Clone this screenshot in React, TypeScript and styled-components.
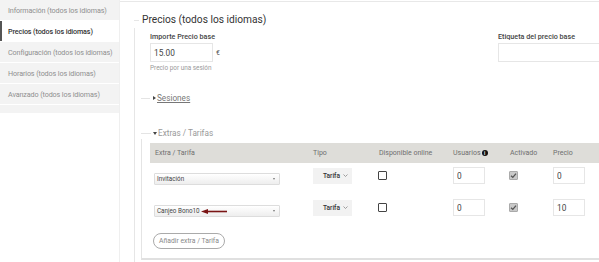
import React from "react";
import styled, { createGlobalStyle, css } from "styled-components";

const Global = createGlobalStyle`
  html, body { margin: 0; padding: 0; background: #fff; }
  body {
    width: 599px; height: 262px; overflow: hidden;
    font-family: Roboto, "Liberation Sans", Arial, sans-serif;
  }
  * { box-sizing: border-box; }
`;

const Page = styled.div`
  display: flex;
  width: 599px;
  height: 262px;
  overflow: hidden;
`;

const Sidebar = styled.nav`
  width: 120px;
  flex-shrink: 0;
  display: flex;
  flex-direction: column;
  gap: 1px;
  border-right: 1px solid #efefef;
`;

const NavItem = styled.div<{ $active?: boolean }>`
  height: 20px;
  display: flex;
  align-items: center;
  padding-left: 6px;
  font-size: 7.2px;
  letter-spacing: -0.12px;
  white-space: nowrap;
  background: ${(p) => (p.$active ? "#fff" : "#f3f3f3")};
  color: ${(p) => (p.$active ? "#333" : "#8f8f8f")};
  font-weight: ${(p) => (p.$active ? 500 : 400)};
  border-left: 2px solid ${(p) => (p.$active ? "#555" : "transparent")};
`;

const NavFiller = styled.div`
  height: 8px;
  background: #f3f3f3;
`;

const Main = styled.main`
  flex: 1;
  min-width: 0;
  margin-top: 1px;
  border-top: 1px solid #e8e8e8;
  padding-left: 14px;
`;

const Section = styled.fieldset`
  margin: 10px 0 0;
  padding: 0 0 0 6px;
  min-width: 0;
  min-height: 320px;
  border: 1px solid transparent;
  border-left-color: #e6e6e6;
  border-right: none;
  border-bottom: none;
`;

const Title = styled.legend`
  display: flex;
  align-items: center;
  gap: 3px;
  margin-left: -7px;
  padding: 0;
  font-size: 10.2px;
  line-height: 16px;
  color: #333;
  &::before {
    content: "";
    width: 5px;
    height: 1px;
    background: #e6e6e6;
  }
`;

const PriceRow = styled.div`
  display: flex;
  padding-left: 9px;
  margin-top: 4px;
`;

const FieldGroup = styled.div<{ $width?: number }>`
  display: flex;
  flex-direction: column;
  flex-shrink: 0;
  width: ${(p) => (p.$width ? `${p.$width}px` : "auto")};
`;

const Label = styled.label`
  font-size: 7.2px;
  font-weight: 500;
  line-height: 10px;
  color: #444;
  margin-bottom: 1px;
`;

const InputLine = styled.div`
  display: flex;
  align-items: center;
  gap: 3px;
`;

const TextInput = styled.input<{ $width: number }>`
  width: ${(p) => p.$width}px;
  height: 19px;
  border: 1px solid #e6e6e6;
  padding: 0 3px;
  font-family: inherit;
  font-size: 8.3px;
  color: #444;
  background: #fff;
  outline: none;
`;

const Euro = styled.span`
  font-size: 7px;
  color: #555;
`;

const Help = styled.div`
  font-size: 6.4px;
  line-height: 9px;
  color: #9a9a9a;
  margin-top: 2px;
`;

const toggleLook = css`
  display: flex;
  align-items: center;
  padding: 0;
  font-size: 8.2px;
  line-height: 12px;
  height: 12px;
`;

const Dash = styled.span<{ $w: number }>`
  width: ${(p) => p.$w}px;
  height: 1px;
  background: #e4e4e4;
  flex-shrink: 0;
`;

const Caret = styled.span<{ $open?: boolean }>`
  width: 0;
  height: 0;
  flex-shrink: 0;
  ${(p) =>
    p.$open
      ? css`
          margin: 0 1px 0 2px;
          border-left: 2px solid transparent;
          border-right: 2px solid transparent;
          border-top: 3px solid #444;
        `
      : css`
          margin: 0 1px 0 3px;
          border-top: 2px solid transparent;
          border-bottom: 2px solid transparent;
          border-left: 3px solid #444;
        `}
`;

const SessionsToggle = styled.div`
  ${toggleLook};
  margin-top: 19px;
  color: #777;
`;

const LinkText = styled.span`
  text-decoration: underline;
  text-underline-offset: 1px;
`;

const Extras = styled.fieldset`
  margin: 23px 0 0;
  padding: 0 0 9px 8px;
  min-width: 0;
  border: 1px solid transparent;
  border-left-color: #e4e4e4;
  border-right: none;
  border-bottom: 2px solid #e0e0e0;
`;

const ExtrasLegend = styled.legend`
  ${toggleLook};
  margin-left: -9px;
  color: #999;
`;

const columns = "158px 66px 74px 57px 43px 1fr";

const HeadRow = styled.div`
  display: grid;
  grid-template-columns: ${columns};
  height: 20px;
  margin-top: 4px;
  background: #deddd9;
  align-items: center;
  font-size: 7px;
  color: #6f6f6f;
`;

const HeadCell = styled.div`
  padding-left: 5px;
  display: flex;
  align-items: center;
  white-space: nowrap;
`;

const InfoDot = styled.span`
  width: 6px;
  height: 6px;
  margin-left: 1px;
  border-radius: 50%;
  background: #111;
  color: #fff;
  font-size: 4.5px;
  font-weight: 700;
  display: inline-flex;
  align-items: center;
  justify-content: center;
`;

const Rows = styled.div`
  display: flex;
  flex-direction: column;
  gap: 15px;
  padding-top: 4px;
`;

const Row = styled.div`
  display: grid;
  grid-template-columns: ${columns};
  height: 17px;
  align-items: center;
`;

const ExtraSelect = styled.div`
  margin-left: 4px;
  width: 126px;
  height: 12px;
  align-self: end;
  margin-bottom: -1px;
  border: 1px solid #dddddd;
  border-radius: 1px;
  background: linear-gradient(#ffffff, #eeeeee);
  display: flex;
  align-items: center;
  padding: 0 4px 0 2px;
  font-size: 6.3px;
  color: #444;
  white-space: nowrap;
`;

const SelectArrow = styled.span`
  margin-left: auto;
  width: 0;
  height: 0;
  border-left: 1.5px solid transparent;
  border-right: 1.5px solid transparent;
  border-top: 2px solid #777;
`;

const TypeSelect = styled.div`
  margin-left: 5px;
  width: 39px;
  height: 16px;
  background: #f2f2f2;
  display: flex;
  align-items: center;
  justify-content: flex-end;
  gap: 3px;
  padding-right: 4px;
  font-size: 6.6px;
  font-weight: 500;
  color: #333;
`;

const CheckBox = styled.span<{ $checked?: boolean }>`
  margin-left: 4px;
  width: 9px;
  height: 9px;
  display: flex;
  align-items: center;
  justify-content: center;
  border: 1px solid ${(p) => (p.$checked ? "#aaa" : "#444")};
  background: ${(p) => (p.$checked ? "#c9c9c9" : "#fff")};
  border-radius: 1px;
`;

const CellInput = styled(TextInput)`
  margin-left: 5px;
  height: 17px;
`;

const AddButton = styled.button`
  margin: 17px 0 0 3px;
  height: 16px;
  width: 72px;
  padding: 0;
  border: 1px solid #aaa;
  border-radius: 8px;
  background: #fff;
  font-family: inherit;
  font-size: 6.8px;
  color: #888;
`;

const Chevron = () => (
  <svg width="5" height="3" viewBox="0 0 5 3">
    <path d="M0.5 0.5 L2.5 2.5 L4.5 0.5" fill="none" stroke="#888" strokeWidth="0.8" />
  </svg>
);

const Check = () => (
  <svg width="7" height="7" viewBox="0 0 7 7">
    <path d="M1 3.8 L2.8 5.4 L6 1.6" fill="none" stroke="#555" strokeWidth="1.3" />
  </svg>
);

const RedArrow = () => (
  <svg width="26" height="5" viewBox="0 0 26 5" style={{ marginLeft: 1, flexShrink: 0 }}>
    <line x1="6" y1="2.5" x2="26" y2="2.5" stroke="#7a1414" strokeWidth="1.6" />
    <polygon points="0,2.5 7,0 7,5" fill="#7a1414" />
  </svg>
);

type ExtraRow = { name: string; users: string; price: string; marked?: boolean };

const rows: ExtraRow[] = [
  { name: "Invitación", users: "0", price: "0" },
  { name: "Canjeo Bono10", users: "0", price: "10", marked: true },
];

export default function App() {
  return (
    <>
      <Global />
      <Page>
        <Sidebar>
          <NavItem>Información (todos los idiomas)</NavItem>
          <NavItem $active>Precios (todos los idiomas)</NavItem>
          <NavItem>Configuración (todos los idiomas)</NavItem>
          <NavItem>Horarios (todos los idiomas)</NavItem>
          <NavItem>Avanzado (todos los idiomas)</NavItem>
          <NavFiller />
        </Sidebar>
        <Main>
          <Section>
            <Title>Precios (todos los idiomas)</Title>
            <PriceRow>
              <FieldGroup $width={348}>
                <Label>Importe Precio base</Label>
                <InputLine>
                  <TextInput $width={63} defaultValue="15.00" readOnly />
                  <Euro>€</Euro>
                </InputLine>
                <Help>Precio por una sesión</Help>
              </FieldGroup>
              <FieldGroup>
                <Label>Etiqueta del precio base</Label>
                <TextInput $width={130} defaultValue="" readOnly />
              </FieldGroup>
            </PriceRow>

            <SessionsToggle>
              <Dash $w={9} />
              <Caret />
              <LinkText>Sesiones</LinkText>
            </SessionsToggle>

            <Extras>
              <ExtrasLegend>
                <Dash $w={10} />
                <Caret $open />
                <span>Extras / Tarifas</span>
              </ExtrasLegend>
              <HeadRow>
                <HeadCell>Extra / Tarifa</HeadCell>
                <HeadCell>Tipo</HeadCell>
                <HeadCell>Disponible online</HeadCell>
                <HeadCell>
                  Usuarios<InfoDot>i</InfoDot>
                </HeadCell>
                <HeadCell>Activado</HeadCell>
                <HeadCell>Precio</HeadCell>
              </HeadRow>
              <Rows>
                {rows.map((r) => (
                  <Row key={r.name}>
                    <ExtraSelect>
                      <span>{r.name}</span>
                      {r.marked && <RedArrow />}
                      <SelectArrow />
                    </ExtraSelect>
                    <TypeSelect>
                      <span>Tarifa</span>
                      <Chevron />
                    </TypeSelect>
                    <CheckBox />
                    <CellInput $width={32} defaultValue={r.users} readOnly />
                    <CheckBox $checked>
                      <Check />
                    </CheckBox>
                    <CellInput $width={32} defaultValue={r.price} readOnly />
                  </Row>
                ))}
              </Rows>
              <AddButton>Añadir extra / Tarifa</AddButton>
            </Extras>
          </Section>
        </Main>
      </Page>
    </>
  );
}
